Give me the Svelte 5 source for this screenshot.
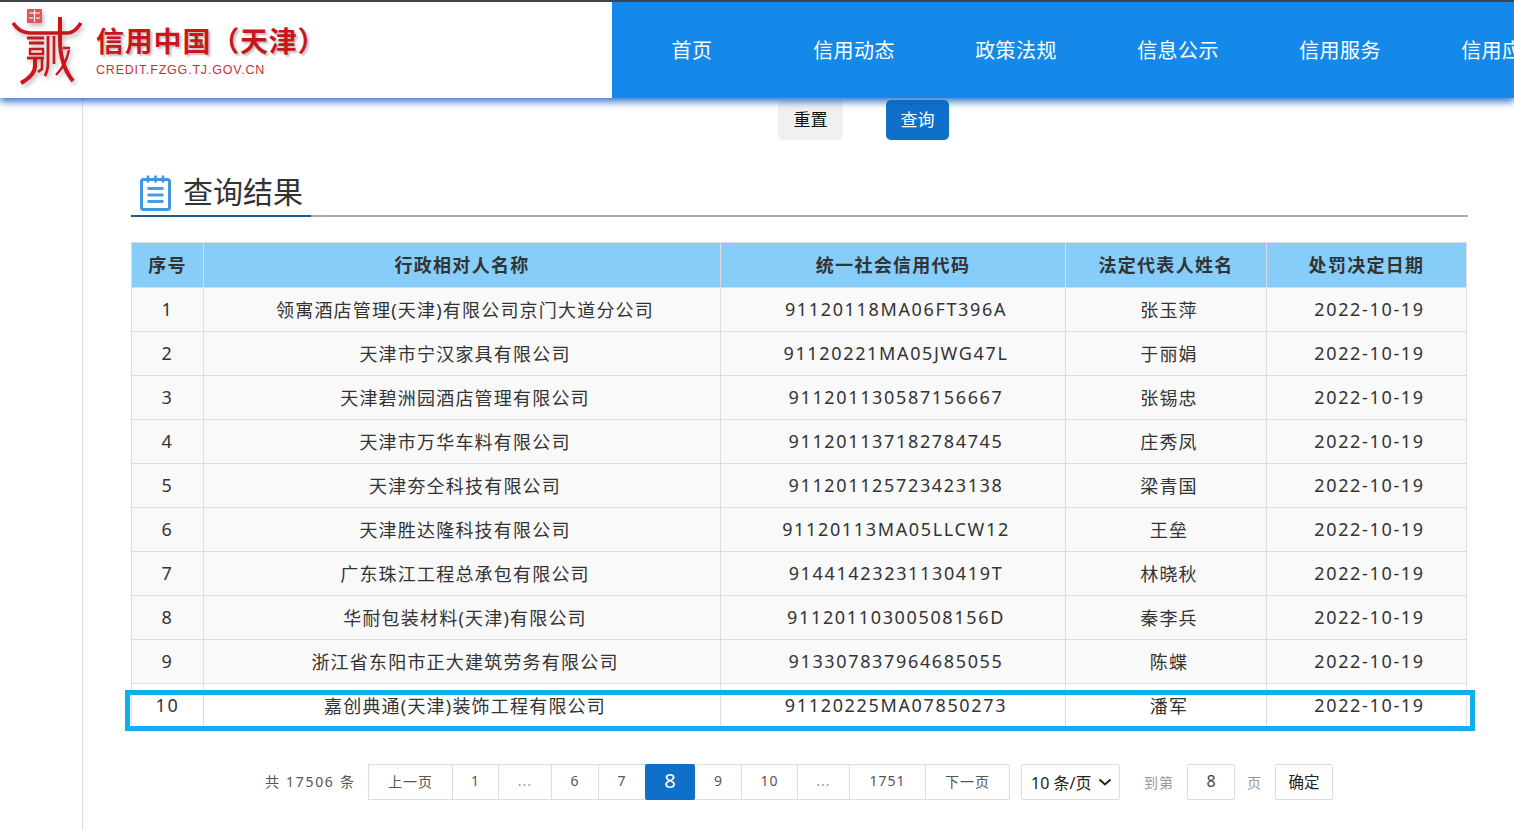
<script lang="ts">
  const navItems = ['首页', '信用动态', '政策法规', '信息公示', '信用服务', '信用应用'];
  const columns = ['序号', '行政相对人名称', '统一社会信用代码', '法定代表人姓名', '处罚决定日期'];

  const rows = [
    ['领寓酒店管理(天津)有限公司京门大道分公司', '91120118MA06FT396A', '张玉萍'],
    ['天津市宁汉家具有限公司', '91120221MA05JWG47L', '于丽娟'],
    ['天津碧洲园酒店管理有限公司', '911201130587156667', '张锡忠'],
    ['天津市万华车料有限公司', '911201137182784745', '庄秀凤'],
    ['天津夯仝科技有限公司', '911201125723423138', '梁青国'],
    ['天津胜达隆科技有限公司', '91120113MA05LLCW12', '王垒'],
    ['广东珠江工程总承包有限公司', '91441423231130419T', '林晓秋'],
    ['华耐包装材料(天津)有限公司', '91120110300508156D', '秦李兵'],
    ['浙江省东阳市正大建筑劳务有限公司', '913307837964685055', '陈蝶'],
    ['嘉创典通(天津)装饰工程有限公司', '91120225MA07850273', '潘军']
  ];

  const pages = [
    { label: '上一页', width: 84 },
    { label: '1', width: 46 },
    { label: '...', width: 53, muted: true },
    { label: '6', width: 47 },
    { label: '7', width: 47 },
    { label: '8', width: 50, active: true },
    { label: '9', width: 46 },
    { label: '10', width: 56 },
    { label: '...', width: 52, muted: true },
    { label: '1751', width: 76 },
    { label: '下一页', width: 83 }
  ];
</script>

<div class="topline"></div>
<header class="header">
  <div class="brand">
    <svg class="logo" viewBox="10 2 75 90" aria-hidden="true">
      <rect x="27" y="9" width="15" height="14" fill="#d9565a" />
      <path d="M29 13h11M29 18h4M36 18h4M34.500 10v12" fill="none" stroke="#fff" stroke-width="1.200" />
      <g fill="none" stroke="#c9161d">
        <path d="M13 23C17 29 22 33 30 33H68C73 33 77 29 81 23" stroke-width="3.600" />
        <path d="M60 17V40C60 56 64 70 73 81" stroke-width="4" />
        <path d="M27 38H44M29 43H44" stroke-width="2.800" />
        <path d="M30 49H43V54H30Z" stroke-width="2.400" />
        <path d="M27 58H44" stroke-width="2.800" />
        <path d="M35 58V66C35 72 30 78 21 83" stroke-width="4" />
        <path d="M42 58V69L38 72" stroke-width="2.600" />
        <path d="M48 36V62C48 68 47 72 45 76" stroke-width="2.800" />
        <path d="M54 36V64" stroke-width="2.600" />
        <path d="M63 48H70" stroke-width="2.600" />
        <path d="M69 50C67 60 63 68 56 75" stroke-width="2.400" />
      </g>
    </svg>
    <div class="brand-text">
      <div class="brand-name">信用中国（天津）</div>
      <div class="brand-url">CREDIT.FZGG.TJ.GOV.CN</div>
    </div>
  </div>
  <nav class="nav">
    {#each navItems as item}
      <span class="nav-item">{item}</span>
    {/each}
  </nav>
</header>

<main class="content">
  <div class="actions">
    <button class="btn btn-reset">重置</button>
    <button class="btn btn-search">查询</button>
  </div>

  <div class="section-title">
    <svg class="title-icon" viewBox="0 0 31 36" aria-hidden="true">
      <rect x="1.500" y="4.500" width="28" height="30" rx="2" fill="none" stroke="#3f97e0" stroke-width="3" />
      <path d="M8 0.500v7M15.500 0.500v7M23 0.500v7" stroke="#3f97e0" stroke-width="2.600" />
      <path d="M7.500 13.500h16M7.500 20h16M7.500 26.500h16" stroke="#4a9de2" stroke-width="2.800" />
    </svg>
    <h2>查询结果</h2>
  </div>

  <div class="table-wrap">
    <table>
      <colgroup>
        <col class="col-no" />
        <col class="col-name" />
        <col class="col-code" />
        <col class="col-person" />
        <col class="col-date" />
      </colgroup>
      <thead>
        <tr>
          {#each columns as col}
            <th>{col}</th>
          {/each}
        </tr>
      </thead>
      <tbody>
        {#each rows as row, i}
          <tr class:last={i === rows.length - 1}>
            <td class="num first">{i + 1}</td>
            <td>{row[0]}</td>
            <td class="num">{row[1]}</td>
            <td>{row[2]}</td>
            <td class="num">2022-10-19</td>
          </tr>
        {/each}
      </tbody>
    </table>
    <div class="highlight"></div>
  </div>

  <div class="pager">
    <span class="total">共 17506 条</span>
    <div class="pages">
      {#each pages as page}
        <span
          class="page"
          class:active={page.active}
          class:muted={page.muted}
          style="width: {page.width}px"
        >{page.label}</span>
      {/each}
    </div>
    <span class="size-select">10 条/页
      <svg viewBox="0 0 14 8" aria-hidden="true"><path d="M1.500 1.500 7 6.500l5.500-5" fill="none" stroke="#222" stroke-width="2" /></svg>
    </span>
    <span class="jump-label first">到第</span>
    <span class="jump-input">8</span>
    <span class="jump-label">页</span>
    <span class="confirm">确定</span>
  </div>
</main>

<style>
  :global(body) {
    margin: 0;
    background: #fff;
    overflow: hidden;
    font-family: "Noto Sans", "Noto Sans CJK SC", sans-serif;
  }

  .topline {
    height: 2px;
    background: #444;
  }

  .header {
    position: relative;
    z-index: 2;
    display: flex;
    height: 96px;
    background: #fff;
    box-shadow: 0 4px 7px rgba(18, 92, 190, 0.8);
    overflow: hidden;
  }

  .brand {
    display: flex;
    width: 612px;
    flex: none;
    padding-left: 10px;
    box-sizing: border-box;
  }

  .logo {
    width: 75px;
    height: 90px;
    flex: none;
    filter: drop-shadow(2px 3px 2px rgba(0, 0, 0, 0.25));
  }

  .brand-text {
    margin-left: 11px;
    padding-top: 21px;
  }

  .brand-name {
    font-size: 28px;
    line-height: 36px;
    font-weight: 700;
    color: #c9161d;
    white-space: nowrap;
    letter-spacing: 0.8px;
    text-shadow: 2px 2px 2px rgba(0, 0, 0, 0.25);
  }

  .brand-url {
    font-family: "Liberation Sans", sans-serif;
    font-size: 12.5px;
    line-height: 16px;
    margin-top: 3px;
    letter-spacing: 0.8px;
    color: #c9303a;
  }

  .nav {
    display: flex;
    flex: 1;
    min-width: 0;
    background: #1589ea;
  }

  .nav-item {
    flex: none;
    width: 162px;
    text-align: center;
    margin-left: -1px;
    margin-right: 1px;
    font-size: 20px;
    letter-spacing: 0.4px;
    line-height: 98px;
    color: #fff;
  }

  .content {
    margin-left: 82px;
    height: 732px;
    border-left: 1px solid #ddd;
    padding: 2px 46px 0 48px;
    box-sizing: border-box;
  }

  .actions {
    display: flex;
    gap: 43px;
    padding-left: 647px;
  }

  .btn {
    height: 40px;
    border: 0;
    border-radius: 5px;
    padding: 0 0 3px;
    font: inherit;
    font-size: 17px;
  }

  .btn-reset {
    width: 65px;
    background: #f0f0f0;
    color: #111;
  }

  .btn-search {
    width: 63px;
    background: #0f70c9;
    color: #fff;
  }

  .section-title {
    display: flex;
    align-items: flex-end;
    height: 77px;
    border-bottom: 2px solid #aaa;
    position: relative;
    padding-left: 9px;
    box-sizing: border-box;
  }

  .section-title::after {
    content: "";
    position: absolute;
    left: 0;
    bottom: -2px;
    width: 180px;
    height: 2px;
    background: #1d5c8e;
  }

  .title-icon {
    width: 31px;
    height: 36px;
    margin-bottom: 4px;
  }

  h2 {
    margin: 0 0 3px 12px;
    font-size: 30px;
    line-height: 40px;
    font-weight: 400;
    color: #333;
  }

  .table-wrap {
    position: relative;
    margin-top: 25px;
    width: 1336px;
  }

  table {
    width: 100%;
    table-layout: fixed;
    border-collapse: collapse;
    color: #333;
  }

  .col-no { width: 72px; }
  .col-name { width: 517px; }
  .col-code { width: 345px; }
  .col-person { width: 201px; }

  th, td {
    border: 1px solid #ddd;
    text-align: center;
    padding: 0 0 2px;
    font-size: 18px;
    letter-spacing: 1.2px;
    white-space: nowrap;
  }

  th {
    height: 42px;
    background: #87cdfa;
    font-weight: 700;
    letter-spacing: 1.3px;
    color: #333;
  }

  td {
    height: 41px;
    padding-left: 6px;
    background: #f9f9f9;
  }

  td.first {
    padding-left: 0;
  }

  .num {
    letter-spacing: 1.65px;
  }

  .last td {
    background: #fff;
  }

  .highlight {
    position: absolute;
    left: -6px;
    right: -8px;
    bottom: -3px;
    height: 41px;
    border: 5px solid #10aeea;
    box-sizing: border-box;
    pointer-events: none;
  }

  .pager {
    display: flex;
    align-items: center;
    margin-top: 36px;
    padding-left: 134px;
    height: 36px;
    font-size: 15px;
    color: #555;
  }

  .total {
    width: 103px;
    flex: none;
    padding-bottom: 3px;
    font-size: 14px;
    letter-spacing: 1.7px;
    white-space: nowrap;
  }

  .pages {
    display: flex;
    height: 36px;
    box-sizing: border-box;
    border: 1px solid #ddd;
  }

  .page {
    display: flex;
    align-items: center;
    justify-content: center;
    box-sizing: border-box;
    padding-bottom: 3px;
    border-right: 1px solid #ddd;
    font-size: 14px;
    letter-spacing: 1px;
    color: #555;
  }

  .page:last-child {
    border-right: 0;
  }

  .page.muted {
    color: #999;
  }

  .page.active {
    height: 36px;
    margin-top: -1px;
    margin-left: -1px;
    margin-right: 1px;
    background: #0f70c9;
    border-right: 0;
    border-radius: 2px;
    color: #fff;
    font-size: 20px;
    letter-spacing: 0;
  }

  .size-select {
    display: flex;
    align-items: center;
    justify-content: space-between;
    box-sizing: border-box;
    width: 99px;
    height: 36px;
    margin-left: 11px;
    padding: 0 7px 1px 9px;
    border: 1px solid #ddd;
    border-radius: 2px;
    font-size: 16px;
    color: #222;
    white-space: nowrap;
  }

  .size-select svg {
    width: 14px;
    height: 8px;
  }

  .jump-label {
    padding-bottom: 1px;
    font-size: 14px;
    color: #999;
    letter-spacing: 1px;
    margin-left: 12px;
  }

  .jump-label.first {
    margin-left: 24px;
  }

  .jump-input {
    width: 48px;
    height: 36px;
    box-sizing: border-box;
    margin-left: 13px;
    border: 1px solid #ddd;
    border-radius: 2px;
    text-align: center;
    line-height: 32px;
    font-size: 16px;
    color: #444;
  }

  .confirm {
    width: 58px;
    height: 36px;
    box-sizing: border-box;
    margin-left: 13px;
    border: 1px solid #ddd;
    border-radius: 2px;
    text-align: center;
    line-height: 34px;
    font-size: 15.5px;
    color: #222;
  }
</style>
